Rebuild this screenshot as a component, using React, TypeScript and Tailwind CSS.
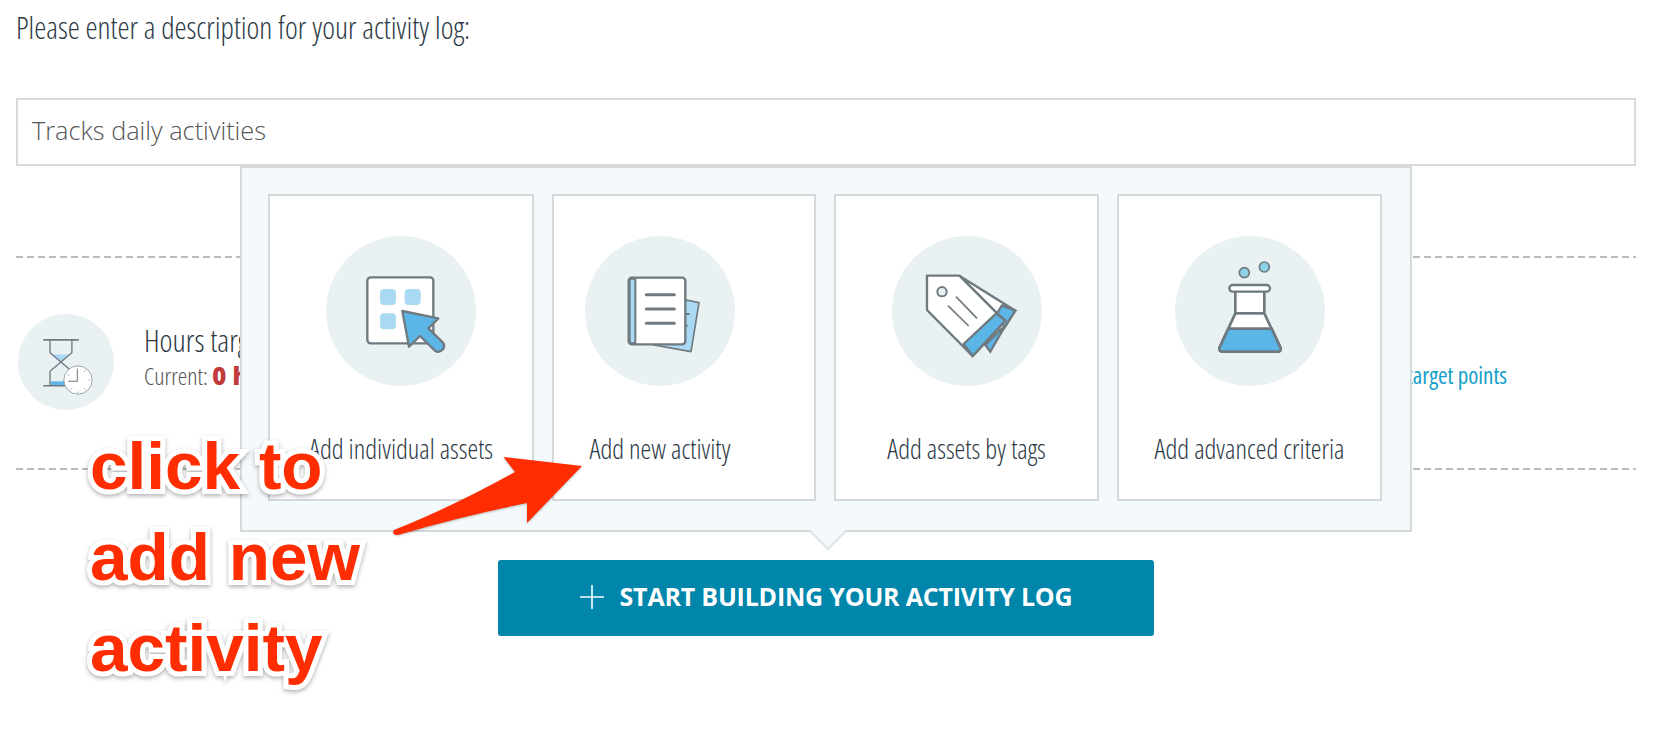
const openSans = "font-['Open_Sans',sans-serif] [font-stretch:75%]";
const gray = "#6f7a80";
const blue = "#5bb5e6";
const pale = "#a9d9f3";

function AssetsIcon() {
  return (
    <svg viewBox="18 18 450 450" className="h-full w-full">
      <rect x="142" y="142" width="198" height="198" rx="10" fill="#fff" stroke={gray} strokeWidth="7" />
      <rect x="180" y="177" width="48" height="48" rx="12" fill={pale} />
      <rect x="254" y="177" width="48" height="48" rx="12" fill={pale} />
      <rect x="180" y="250" width="48" height="48" rx="12" fill={pale} />
      <path
        d="M247 243 L355 265 L325 295 L369 338 Q376 347 369 358 Q358 370 345 362 L300 318 L267 350 Z"
        fill={blue}
        stroke={gray}
        strokeWidth="7"
        strokeLinejoin="round"
      />
    </svg>
  );
}

function ActivityIcon() {
  return (
    <svg viewBox="14 18 450 450" className="h-full w-full">
      <path d="M318 210 L356 218 L332 365 L220 345 Z" fill={pale} stroke={gray} strokeWidth="5" strokeLinejoin="round" />
      <path d="M315 252 H328 M315 287 H322" stroke={gray} strokeWidth="6" />
      <rect x="145" y="143" width="170" height="200" rx="10" fill="#fff" stroke={gray} strokeWidth="7" />
      <path d="M165 146 H155 Q148 146 148 153 V333 Q148 340 155 340 H165 Z" fill={pale} stroke={gray} strokeWidth="6" />
      <path d="M198 194 H282 M198 237 H282 M198 280 H282" stroke={gray} strokeWidth="9" strokeLinecap="round" />
    </svg>
  );
}

function TagsIcon() {
  return (
    <svg viewBox="20 18 450 450" className="h-full w-full">
      <path d="M300 345 L345 300 L358 290 L315 365 Z" fill={blue} stroke={gray} strokeWidth="7" strokeLinejoin="miter" />
      <path d="M222 137 L390 242 L358 292 L335 250 Z" fill="#fff" stroke={gray} strokeWidth="7" strokeLinejoin="miter" />
      <path d="M350 226 L390 242 L358 292 L335 250 Z" fill={blue} stroke={gray} strokeWidth="7" strokeLinejoin="miter" />
      <path d="M125 137 H222 L330 245 L360 272 L262 378 L125 240 Z" fill="#fff" stroke={gray} strokeWidth="7" strokeLinejoin="miter" />
      <path d="M235 342 L333 250 L360 272 L262 378 Z" fill={blue} stroke={gray} strokeWidth="7" strokeLinejoin="miter" />
      <circle cx="170" cy="185" r="14" fill="#e9f1f3" stroke={gray} strokeWidth="6" />
      <path d="M212 200 L275 265 M188 227 L250 288" stroke={gray} strokeWidth="5" />
    </svg>
  );
}

function FlaskIcon() {
  return (
    <svg viewBox="32 18 450 450" className="h-full w-full">
      <circle cx="240" cy="128" r="15" fill="#8fd3e8" stroke={gray} strokeWidth="5" />
      <circle cx="300" cy="111" r="15" fill="#8fd3e8" stroke={gray} strokeWidth="5" />
      <path d="M213 180 V250 L166 352 Q163 365 175 365 H340 Q352 365 348 352 L300 250 V180 Z" fill="#fff" stroke={gray} strokeWidth="8" strokeLinejoin="round" />
      <path d="M192 296 H322 L348 352 Q352 365 340 365 H175 Q163 365 166 352 Z" fill={blue} stroke={gray} strokeWidth="8" strokeLinejoin="round" />
      <path d="M213 250 H300" stroke={gray} strokeWidth="8" />
      <rect x="195" y="165" width="122" height="20" rx="10" fill="#fff" stroke={gray} strokeWidth="7" />
    </svg>
  );
}

function HourglassIcon() {
  return (
    <svg viewBox="25 25 285 285" className="h-full w-full">
      <path d="M125 145 H180 L152 168 Z" fill={pale} />
      <path d="M123 225 H170 V238 H123 Z" fill={blue} />
      <path d="M100 102 H205 M100 238 H180" stroke={gray} strokeWidth="5" />
      <path d="M120 102 V140 L185 195 M185 102 V140 L120 195 V238" fill="none" stroke={gray} strokeWidth="4" />
      <circle cx="203" cy="221" r="42" fill="#fff" stroke={gray} strokeWidth="2" />
      <path d="M201 187 V225 H174" fill="none" stroke={gray} strokeWidth="3" />
      <path d="M203 255 V260 M238 221 H233 M225 193 L222 197 M225 249 L222 245 M181 249 L184 245 M173 205 L177 207" stroke={gray} strokeWidth="2" />
    </svg>
  );
}

function OptionCard({ label, icon, shifted }: { label: string; icon: React.ReactNode; shifted?: boolean }) {
  return (
    <div className={`flex h-[307px] flex-col items-center border-2 border-[#d5d9db] bg-white pt-[40px] ${shifted ? "pr-[48px]" : ""}`}>
      <div className="h-[150px] w-[150px] rounded-full bg-[#e9f1f3]">{icon}</div>
      <div className={`${openSans} mt-[45px] whitespace-nowrap text-[27px] font-light leading-[36px] text-[#2d3a46]`}>{label}</div>
    </div>
  );
}

function Dashes() {
  return <div className="h-[2px] bg-[repeating-linear-gradient(90deg,#bbbbbb_0,#bbbbbb_7px,transparent_7px,transparent_11px)]" />;
}

export default function App() {
  return (
    <div className="relative h-[744px] overflow-hidden bg-white px-[16px]">
      <div className={`${openSans} whitespace-nowrap pt-[9px] text-[30.5px] font-light leading-[36px] text-[#2d3a46]`}>
        Please enter a description for your activity log:
      </div>

      <div className="mt-[53px] flex h-[68px] w-[1620px] items-center border-2 border-[#d8dadb] pb-[3px] pl-[14px] font-['Open_Sans',sans-serif] text-[25.3px] font-light text-[#555]">
        Tracks daily activities
      </div>

      <div className="mt-[90px] w-[1620px]">
        <Dashes />
        <div className="flex h-[210px] items-start pl-[2px] pt-[56px]">
          <div className="h-[96px] w-[96px] rounded-full bg-[#e9f1f3]">
            <HourglassIcon />
          </div>
          <div className={`${openSans} ml-[30px] font-light`}>
            <div className="mt-[6px] text-[31px] leading-[40px] text-[#2d3a46]">Hours target</div>
            <div className="mt-[1px] text-[24px] leading-[30px] text-[#555]">
              Current: <span className="font-extrabold text-[#c0393b] [font-stretch:100%]">0 hours</span>
            </div>
          </div>
          <div className={`${openSans} ml-auto mr-[129px] mt-[46px] text-[23px] leading-[30px] text-[#12a0c8]`}>Set target points</div>
        </div>
        <Dashes />
      </div>

      <div className="relative ml-[482px] mt-[90px] w-[656px]">
        <div className="absolute bottom-[calc(100%+28px)] left-[-258px] z-10 h-[366px] w-[1172px] border-2 border-[#d5d9db] bg-[#f4f9fb] pl-[26px] pt-[26px]">
          <div className="relative z-10 grid grid-cols-[266px_264px_265px_265px] gap-[18px]">
            <OptionCard label="Add individual assets" icon={<AssetsIcon />} />
            <OptionCard label="Add new activity" icon={<ActivityIcon />} shifted />
            <OptionCard label="Add assets by tags" icon={<TagsIcon />} />
            <OptionCard label="Add advanced criteria" icon={<FlaskIcon />} />
          </div>
          <div className="absolute bottom-[-15px] left-[573px] h-[26px] w-[26px] rotate-45 border-b-2 border-r-2 border-[#dfe3e5] bg-[#f4f9fb]" />
        </div>

        <button className="flex h-[76px] w-full items-center justify-center gap-[16px] rounded-[3px] bg-[#0085ab] pb-[2px] font-['Open_Sans',sans-serif] text-[25px] font-bold tracking-[-0.2px] text-white">
          <svg viewBox="0 0 24 24" className="h-[24px] w-[24px]">
            <path d="M0 12 H24 M12 0 V24" stroke="#fff" strokeWidth="1.6" />
          </svg>
          START BUILDING YOUR ACTIVITY LOG
        </button>
      </div>

      {/* annotation drawn on top of the screenshot */}
      <svg viewBox="0 0 1676 744" className="pointer-events-none absolute left-0 top-0 z-20 h-[744px] w-[1676px] drop-shadow-[0_1px_1px_rgba(0,0,0,0.25)]">
        <path
          d="M394 530 Q452 507 515 472 L503.5 457 L582 466 L527 523 L527 503 Q462 516 398 535 Q391 535 394 530 Z"
          fill="#ff2d00"
        />
      </svg>
      <div className="absolute left-[90px] top-[420px] z-30 whitespace-nowrap font-['Liberation_Sans',sans-serif] text-[67.5px] font-bold leading-[91px] text-[#ff2d00] [-webkit-text-stroke:10px_white] [paint-order:stroke_fill] drop-shadow-[0_2px_2px_rgba(0,0,0,0.3)]">
        <div>click to</div>
        <div>add new</div>
        <div>activity</div>
      </div>
    </div>
  );
}
